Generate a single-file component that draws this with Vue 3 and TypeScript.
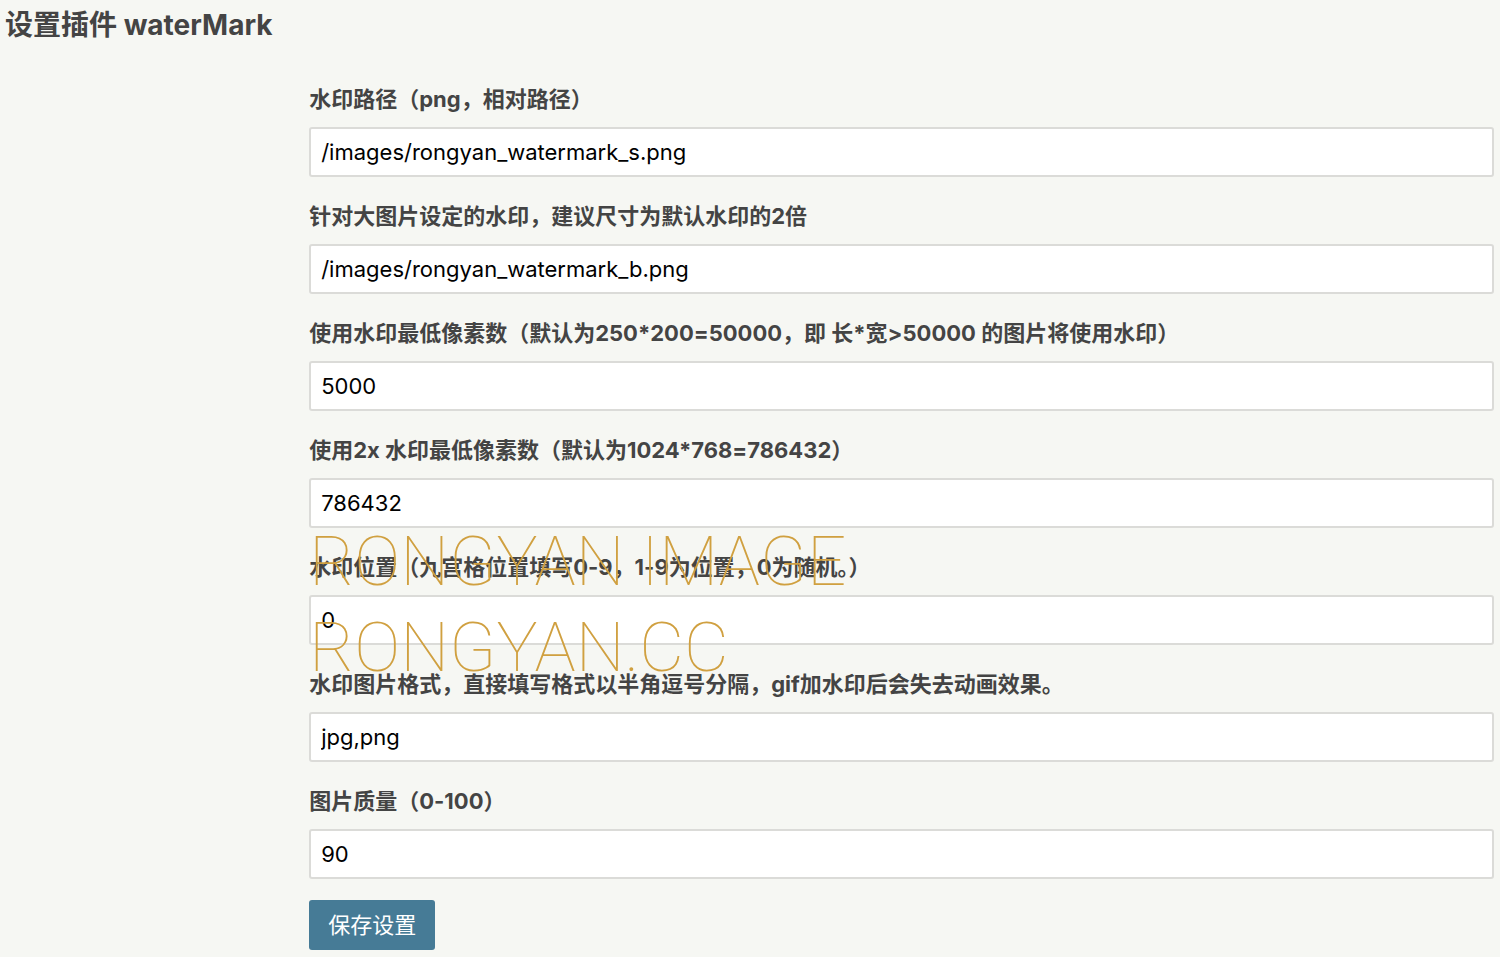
<script setup lang="ts">
import { reactive } from 'vue'

interface Option {
  name: string
  label: string
  value: string
}

const options = reactive<Option[]>([
  { name: 'path', label: '水印路径（png，相对路径）', value: '/images/rongyan_watermark_s.png' },
  { name: 'path2x', label: '针对大图片设定的水印，建议尺寸为默认水印的2倍', value: '/images/rongyan_watermark_b.png' },
  { name: 'pixels', label: '使用水印最低像素数（默认为250*200=50000，即 长*宽>50000 的图片将使用水印）', value: '5000' },
  { name: 'pixels2x', label: '使用2x 水印最低像素数（默认为1024*768=786432）', value: '786432' },
  { name: 'position', label: '水印位置（九宫格位置填写0-9，1-9为位置，0为随机。）', value: '0' },
  { name: 'formats', label: '水印图片格式，直接填写格式以半角逗号分隔，gif加水印后会失去动画效果。', value: 'jpg,png' },
  { name: 'quality', label: '图片质量（0-100）', value: '90' },
])
</script>

<template>
  <main class="page">
    <h2 class="title">设置插件 waterMark</h2>
    <div class="row">
      <form class="form" @submit.prevent>
        <div class="options">
          <div v-for="o in options" :key="o.name" class="option">
            <label class="label" :for="o.name">{{ o.label }}</label>
            <input :id="o.name" v-model="o.value" class="text" type="text" :name="o.name" />
          </div>
        </div>
        <button class="primary" type="submit">保存设置</button>
        <div class="watermark">RONGYAN IMAGE<br />RONGYAN.CC</div>
      </form>
    </div>
  </main>
</template>

<style>
body {
  margin: 0;
  background: #f6f7f3;
}
</style>

<style scoped>
.page {
  padding: 5px 6px 7px 5px;
  color: #444;
  font-family: Inter, "Noto Sans CJK SC", sans-serif;
  font-size: 22px;
  font-variant-ligatures: no-contextual;
}
.title {
  margin: 0;
  font-size: 28px;
  line-height: 40px;
  font-weight: 700;
}
.row {
  display: grid;
  grid-template-columns: 1fr 4fr;
  column-gap: 8px;
  margin-top: 39px;
}
.form {
  grid-column: 2;
  position: relative;
}
.options {
  display: flex;
  flex-direction: column;
  gap: 24px;
  margin-bottom: 21px;
}
.option {
  display: flex;
  flex-direction: column;
  gap: 13px;
}
.label {
  align-self: flex-start;
  line-height: 30px;
  font-weight: 700;
}
.text {
  box-sizing: border-box;
  width: 100%;
  height: 50px;
  padding: 0 10px;
  border: 2px solid #dbdbd8;
  border-radius: 3px;
  background: #fff;
  color: #000;
  font: inherit;
  font-variant-ligatures: inherit;
}
.primary {
  display: block;
  height: 50px;
  padding: 0 19px 4px;
  border: 0;
  border-radius: 3px;
  background: #467b96;
  color: #fff;
  font: inherit;
}
.watermark {
  position: absolute;
  top: 435px;
  left: 0;
  color: #d0a040;
  font-family: Roboto, sans-serif;
  font-size: 69px;
  font-weight: 100;
  line-height: 86px;
  white-space: nowrap;
  pointer-events: none;
}
</style>
